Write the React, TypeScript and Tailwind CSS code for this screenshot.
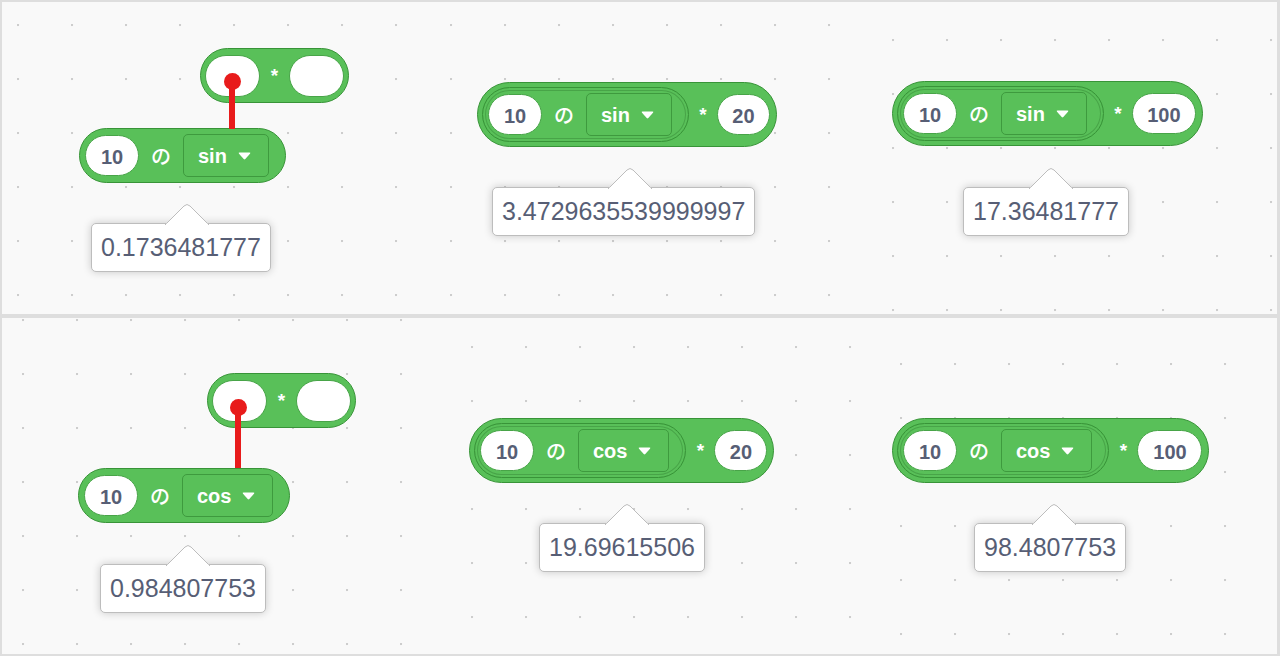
import clsx from "clsx";

// dotted workspace grid, offset per cell since each cell is its own capture
const GRID =
  "bg-[radial-gradient(circle_at_1px_1px,#cdcdcd_1px,transparent_1.6px)] bg-[length:54px_54px]";

const Arrow = () => (
  <svg width="13" height="8" viewBox="0 0 13 8" className="shrink-0">
    <path d="M1.6 0.6 H11.4 Q12.9 0.6 12 1.8 L7.3 7 Q6.5 7.8 5.7 7 L1 1.8 Q0.1 0.6 1.6 0.6 Z" fill="#ffffff" />
  </svg>
);

interface OvalProps {
  value?: string;
  className: string;
}

const Oval = ({ value, className }: OvalProps) => (
  <div
    className={clsx(
      "shrink-0 rounded-full bg-white border border-[#48a448] flex items-center justify-center pt-[3px] text-[20px] font-bold text-[#575e75] leading-none",
      className
    )}
  >
    {value}
  </div>
);

const Dropdown = ({ label }: { label: string }) => (
  <div className="shrink-0 h-[43px] rounded-[5px] border border-[#3e9a3e] flex items-center gap-[11px] pl-[14px] pr-[17px] text-white text-[20px] font-bold leading-none">
    <span className="mt-[1px]">{label}</span>
    <Arrow />
  </div>
);

const Star = ({ className }: { className: string }) => (
  <div className={clsx("shrink-0 text-center text-white font-bold text-[19px] leading-none", className)}>*</div>
);

const OfBlock = ({ op, nested }: { op: string; nested?: boolean }) => (
  <div
    className={clsx(
      "shrink-0 h-[55px] rounded-full bg-[#59c059] border border-[#389438] flex items-center pl-[5px] pr-[16px]",
      nested && "shadow-[inset_0_0_0_2px_#59c059,inset_0_0_0_3px_#48a448]"
    )}
  >
    <Oval value="10" className="w-[54px] h-[41px]" />
    <span className="ml-[12px] mr-[12px] w-[20px] text-white text-[20px] font-medium leading-none font-['Noto_Sans_CJK_JP',sans-serif]">
      の
    </span>
    <Dropdown label={op} />
  </div>
);

const MulBlock = ({ op, value, ovalWidth }: { op: string; value: string; ovalWidth: string }) => (
  <div className="h-[65px] rounded-full bg-[#59c059] border border-[#389438] flex items-center pl-[4px] pr-[6px]">
    <OfBlock op={op} nested />
    <Star className="w-[28px]" />
    <Oval value={value} className={clsx("h-[41px]", ovalWidth)} />
  </div>
);

const EmptyMul = () => (
  <div className="h-[55px] rounded-full bg-[#59c059] border border-[#389438] flex items-center pl-[4px] pr-[4px]">
    <Oval className="w-[55px] h-[42px]" />
    <Star className="w-[29px]" />
    <Oval className="w-[55px] h-[42px]" />
  </div>
);

const Report = ({ text, tip }: { text: string; tip: string }) => (
  <div className="relative h-[49px] px-[9px] flex items-center bg-white rounded-[5px] border border-[#bdbdbd] shadow-[0_0_8px_rgba(0,0,0,0.2)] text-[25px] text-[#575e75] leading-none whitespace-nowrap">
    {text}
    <svg width="46" height="23" viewBox="0 0 46 23" className={clsx("absolute -top-[21px]", tip)}>
      <path d="M1 22 L20 3 Q23 0 26 3 L45 22" fill="#ffffff" stroke="#bdbdbd" strokeWidth="1" />
      <rect x="2.5" y="20.6" width="41" height="2.4" fill="#ffffff" />
    </svg>
  </div>
);

const Pin = ({ dot, line }: { dot: string; line: string }) => (
  <>
    <div className={clsx("absolute w-[6px] bg-[#e81b1b]", line)} />
    <div className={clsx("absolute w-[17px] h-[17px] rounded-full bg-[#e81b1b]", dot)} />
  </>
);

export default function App() {
  return (
    <div className="w-[1280px] h-[656px] bg-[#dedede] pt-[2px] pl-[2px] pr-[3px] pb-[2px] flex flex-col gap-[4px] font-['Liberation_Sans','Noto_Sans_CJK_JP',sans-serif]">
      {/* sin */}
      <section className="relative h-[312px] flex bg-[#f9f9f9]">
        <div className={clsx("w-[440px]", GRID, "bg-[position:15px_22px]")} />
        <div className={clsx("w-[420px]", GRID, "bg-[position:8px_22px]")} />
        <div className={clsx("flex-1", GRID, "bg-[position:30px_37px]")} />

        <div className="absolute left-[198px] top-[46px]">
          <EmptyMul />
        </div>
        <div className="absolute left-[77px] top-[126px]">
          <OfBlock op="sin" />
        </div>
        <Pin line="left-[227px] top-[79px] h-[48px]" dot="left-[222px] top-[71px]" />
        <div className="absolute left-[89px] top-[221px]">
          <Report text="0.1736481777" tip="left-[72px]" />
        </div>

        <div className="absolute left-[475px] top-[80px]">
          <MulBlock op="sin" value="20" ovalWidth="w-[53px]" />
        </div>
        <div className="absolute left-[490px] top-[185px]">
          <Report text="3.4729635539999997" tip="left-[114px]" />
        </div>

        <div className="absolute left-[890px] top-[79px]">
          <MulBlock op="sin" value="100" ovalWidth="w-[64px]" />
        </div>
        <div className="absolute left-[961px] top-[185px]">
          <Report text="17.36481777" tip="left-[64px]" />
        </div>
      </section>

      {/* cos */}
      <section className="relative flex-1 flex bg-[#f9f9f9]">
        <div className={clsx("w-[440px]", GRID, "bg-[position:20px_1px]")} />
        <div className={clsx("w-[420px]", GRID, "bg-[position:29px_28px]")} />
        <div className={clsx("flex-1", GRID, "bg-[position:38px_45px]")} />

        <div className="absolute left-[205px] top-[55px]">
          <EmptyMul />
        </div>
        <div className="absolute left-[76px] top-[150px]">
          <OfBlock op="cos" />
        </div>
        <Pin line="left-[233px] top-[89px] h-[61px]" dot="left-[228px] top-[81px]" />
        <div className="absolute left-[98px] top-[246px]">
          <Report text="0.984807753" tip="left-[64px]" />
        </div>

        <div className="absolute left-[467px] top-[100px]">
          <MulBlock op="cos" value="20" ovalWidth="w-[53px]" />
        </div>
        <div className="absolute left-[537px] top-[205px]">
          <Report text="19.69615506" tip="left-[64px]" />
        </div>

        <div className="absolute left-[890px] top-[100px]">
          <MulBlock op="cos" value="100" ovalWidth="w-[65px]" />
        </div>
        <div className="absolute left-[972px] top-[205px]">
          <Report text="98.4807753" tip="left-[56px]" />
        </div>
      </section>
    </div>
  );
}
